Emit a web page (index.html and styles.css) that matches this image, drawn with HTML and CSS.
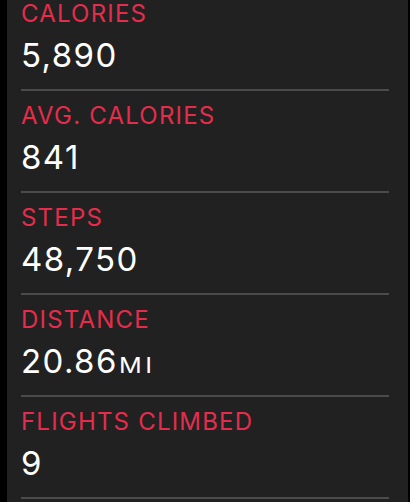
FILE: index.html
```html
<html>

<head>
<title>Activity</title>
<meta http-equiv="content-type" content="text/html; charset=utf-8">

<link rel="stylesheet" href="styles.css">
</head>

<body>

<div class="panel">
  <div class="stats">

    <div class="stat">
      <div class="label">CALORIES</div>
      <div class="value">5,890</div>
    </div>

    <div class="stat">
      <div class="label">AVG. CALORIES</div>
      <div class="value">841</div>
    </div>

    <div class="stat">
      <div class="label">STEPS</div>
      <div class="value">48,750</div>
    </div>

    <div class="stat">
      <div class="label">DISTANCE</div>
      <div class="value">20.86<span class="unit">MI</span></div>
    </div>

    <div class="stat">
      <div class="label">FLIGHTS CLIMBED</div>
      <div class="value">9</div>
    </div>

  </div>
</div>

</body>
</html>
```

FILE: styles.css
```css
html, body {
  margin: 0;
  height: 100%;
  background: #000;
  overflow: hidden;
}

body {
  font-family: Inter, "Liberation Sans", sans-serif;
}

.panel {
  margin: 0 2px 0 7px;
  height: 100%;
  background: #212121;
  overflow: hidden;
}

.stats {
  margin-top: -11px;
}

/* each row is 102px: 11 + 89 + 2px rule */
.stat {
  height: 89px;
  margin: 0 19px 0 14px;
  padding-top: 11px;
  border-bottom: 2px solid #4b4b4b;
}

.label {
  font-size: 24px;
  line-height: 28px;
  letter-spacing: 1.2px;
  color: #e42d4c;
}

.value {
  margin-top: 7px;
  font-size: 33px;
  line-height: 40px;
  letter-spacing: 1.4px;
  color: #fff;
}

/* small-caps unit, drawn a little wide like the watch font */
.unit {
  display: inline-block;
  font-size: 21px;
  line-height: 20px;
  letter-spacing: 3px;
  margin-left: 1px;
  transform: scaleX(1.2);
  transform-origin: left;
}
```
